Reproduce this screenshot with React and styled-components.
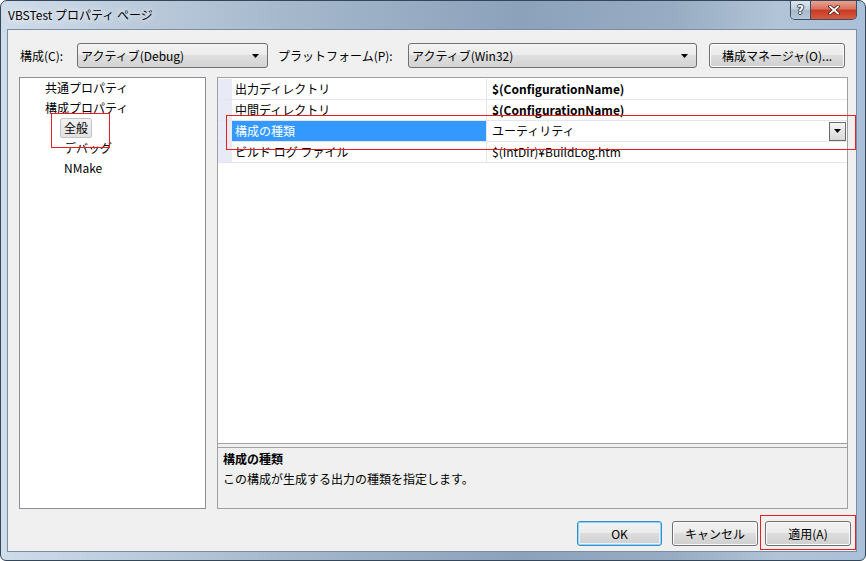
import React from "react";
import styled, { createGlobalStyle } from "styled-components";

const FONT = `"Noto Sans CJK JP", "Noto Sans", sans-serif`;

const GlobalStyle = createGlobalStyle`
  html, body {
    margin: 0;
    padding: 0;
    background: #ffffff;
  }
  body {
    font-family: ${FONT};
    font-size: 12px;
    color: #000;
  }
  * {
    box-sizing: border-box;
  }
`;

const Window = styled.div`
  position: relative;
  width: 866px;
  height: 561px;
  display: flex;
  flex-direction: column;
  border: 1px solid #34465a;
  border-radius: 7px 7px 6px 6px;
  overflow: hidden;
  background: linear-gradient(
    90deg,
    #cfdcea 0%,
    #c0cfdf 12%,
    #a3b6ca 35%,
    #8ca2bb 60%,
    #98adc3 78%,
    #b2c4d7 90%,
    #a9c0d8 100%
  );
  font-family: ${FONT};
  font-size: 12px;
`;

const TitleBar = styled.div`
  height: 28px;
  display: flex;
  align-items: flex-start;
  flex-shrink: 0;
`;

const TitleText = styled.div`
  padding-left: 7px;
  line-height: 27px;
  color: #000;
  text-shadow: 0 0 6px rgba(255, 255, 255, 0.95), 0 0 10px rgba(255, 255, 255, 0.7);
`;

const CaptionGroup = styled.div`
  margin-left: auto;
  margin-right: 8px;
  display: flex;
  height: 19px;
  border: 1px solid #3d4e62;
  border-top: none;
  border-radius: 0 0 5px 5px;
  overflow: hidden;
`;

const HelpButton = styled.div`
  width: 20px;
  display: flex;
  align-items: center;
  justify-content: center;
  border-right: 1px solid #3d4e62;
  background: linear-gradient(#dbe4ee 0%, #c3d0de 45%, #a7b9cc 50%, #b6c7d9 100%);
  color: #fff;
  font-family: "DejaVu Sans", sans-serif;
  font-weight: bold;
  font-size: 12px;
  text-shadow: 0 0 1px #233040, 1px 0 0 #3b4b5c, -1px 0 0 #3b4b5c, 0 1px 0 #3b4b5c, 0 -1px 0 #3b4b5c;
`;

const CloseButton = styled.div`
  width: 45px;
  display: flex;
  align-items: center;
  justify-content: center;
  background: linear-gradient(#eba392 0%, #d8705f 45%, #c83a26 50%, #d85a3c 100%);
`;

const Client = styled.div`
  flex: 1;
  margin: 0 8px 8px 6px;
  border: 1px solid #7b8da2;
  background: #f0f0f0;
  display: flex;
  flex-direction: column;
  padding: 13px 5px 5px 11px;
`;

const Toolbar = styled.div`
  display: flex;
  align-items: center;
  height: 25px;
`;

const Label = styled.div`
  width: ${(p) => p.$w}px;
  margin-left: ${(p) => p.$ml || 0}px;
  white-space: nowrap;
  line-height: 25px;
`;

const Combo = styled.div`
  width: ${(p) => p.$w}px;
  height: 25px;
  display: flex;
  align-items: center;
  padding: 0 8px 0 3px;
  border: 1px solid #707070;
  border-radius: 3px;
  background: linear-gradient(#f3f3f3 0%, #ebebeb 50%, #dedede 50%, #d3d3d3 100%);
  white-space: nowrap;
`;

const ComboText = styled.span`
  flex: 1;
`;

const PushButton = styled.div`
  width: ${(p) => p.$w}px;
  height: 25px;
  margin-left: ${(p) => p.$ml || 0}px;
  margin-right: ${(p) => p.$mr || 0}px;
  display: flex;
  align-items: center;
  justify-content: center;
  border: 1px solid ${(p) => (p.$default ? "#3c8ccb" : "#707070")};
  border-radius: 3px;
  background: linear-gradient(#f2f2f2 0%, #ebebeb 50%, #dddddd 50%, #cfcfcf 100%);
  box-shadow: ${(p) =>
    p.$default ? "inset 0 0 0 1px #8fd3f5, inset 0 0 0 2px #e6f5fd" : "inset 0 0 0 1px #fcfcfc"};
  white-space: nowrap;
`;

const Main = styled.div`
  display: flex;
  gap: 11px;
  height: 432px;
  margin-top: 9px;
`;

const Tree = styled.div`
  width: 187px;
  border: 1px solid #8b8f96;
  background: #fff;
`;

const TreeRow = styled.div`
  height: 20px;
  line-height: 20px;
  padding-left: ${(p) => (p.$level === 0 ? 25 : 44)}px;
  white-space: nowrap;
`;

const TreeLabel = styled.span`
  display: inline-block;
  height: 20px;
  ${(p) =>
    p.$selected &&
    `
    margin-left: -4px;
    padding: 0 3px;
    line-height: 18px;
    border: 1px solid #c4c4c4;
    border-radius: 2px;
    background: linear-gradient(#f2f2f2, #e2e2e2);
  `}
`;

const RightPanel = styled.div`
  width: 631px;
  border: 1px solid #a0a0a0;
  background: #f0f0f0;
  display: flex;
  flex-direction: column;
`;

const Grid = styled.div`
  height: 366px;
  padding-top: 1px;
  background: #fff;
  border-bottom: 1px solid #a0a0a0;
`;

const GridRow = styled.div`
  display: grid;
  grid-template-columns: 14px 255px 1fr;
  height: 21px;
  border-bottom: 1px solid #e3e6f1;
`;

const Margin = styled.div`
  background: #e8ebf6;
`;

const NameCell = styled.div`
  padding-left: 3px;
  line-height: 20px;
  border-right: 1px solid #e3e6f1;
  white-space: nowrap;
  background: ${(p) => (p.$selected ? "#3399ff" : "#fff")};
  color: ${(p) => (p.$selected ? "#fff" : "#000")};
`;

const ValueCell = styled.div`
  display: flex;
  align-items: center;
  padding-left: 5px;
  line-height: 20px;
  font-weight: ${(p) => (p.$bold ? "bold" : "normal")};
  white-space: nowrap;
`;

const DropButton = styled.div`
  margin-left: auto;
  margin-right: 1px;
  width: 17px;
  height: 19px;
  display: flex;
  align-items: center;
  justify-content: center;
  border: 1px solid #6a6a6a;
  background: linear-gradient(#f6f6f6 0%, #e6e6e6 50%, #d8d8d8 100%);
`;

const Splitter = styled.div`
  height: 3px;
`;

const Description = styled.div`
  flex: 1;
  border-top: 1px solid #a0a0a0;
  padding: 1px 5px 0;
  line-height: 20px;
`;

const DescTitle = styled.div`
  font-weight: bold;
`;

const ButtonRow = styled.div`
  display: flex;
  justify-content: flex-end;
  gap: 7px;
  margin-top: 12px;
`;

const RedBox = styled.div`
  position: absolute;
  left: ${(p) => p.$x}px;
  top: ${(p) => p.$y}px;
  width: ${(p) => p.$w}px;
  height: ${(p) => p.$h}px;
  border: 1px solid #ea1c24;
  pointer-events: none;
`;

const Arrow = () => (
  <svg width="7" height="4" viewBox="0 0 7 4">
    <path d="M0 0 H7 L3.5 4 Z" fill="#000" />
  </svg>
);

const CloseGlyph = () => (
  <svg width="12" height="10" viewBox="0 0 12 10">
    <path d="M2 1.5 L10 8.5 M10 1.5 L2 8.5" stroke="#4a1c14" strokeWidth="3.4" strokeLinecap="square" />
    <path d="M2 1.5 L10 8.5 M10 1.5 L2 8.5" stroke="#fff" strokeWidth="1.8" strokeLinecap="square" />
  </svg>
);

const rows = [
  { name: "出力ディレクトリ", value: "$(ConfigurationName)", bold: true },
  { name: "中間ディレクトリ", value: "$(ConfigurationName)", bold: true },
  { name: "構成の種類", value: "ユーティリティ", selected: true },
  { name: "ビルド ログ ファイル", value: "$(IntDir)¥BuildLog.htm" },
];

const treeItems = [
  { label: "共通プロパティ", level: 0 },
  { label: "構成プロパティ", level: 0 },
  { label: "全般", level: 1, selected: true },
  { label: "デバッグ", level: 1 },
  { label: "NMake", level: 1 },
];

export default function App() {
  return (
    <>
      <GlobalStyle />
      <Window>
        <TitleBar>
          <TitleText>VBSTest プロパティ ページ</TitleText>
          <CaptionGroup>
            <HelpButton>?</HelpButton>
            <CloseButton>
              <CloseGlyph />
            </CloseButton>
          </CaptionGroup>
        </TitleBar>

        <Client>
          <Toolbar>
            <Label $w={57} $ml={1}>構成(C):</Label>
            <Combo $w={191}>
              <ComboText>アクティブ(Debug)</ComboText>
              <Arrow />
            </Combo>
            <Label $w={130} $ml={10}>プラットフォーム(P):</Label>
            <Combo $w={289}>
              <ComboText>アクティブ(Win32)</ComboText>
              <Arrow />
            </Combo>
            <PushButton $w={136} $ml={12}>構成マネージャ(O)...</PushButton>
          </Toolbar>

          <Main>
            <Tree>
              {treeItems.map((item) => (
                <TreeRow key={item.label} $level={item.level}>
                  <TreeLabel $selected={item.selected}>{item.label}</TreeLabel>
                </TreeRow>
              ))}
            </Tree>

            <RightPanel>
              <Grid>
                {rows.map((row) => (
                  <GridRow key={row.name}>
                    <Margin />
                    <NameCell $selected={row.selected}>{row.name}</NameCell>
                    <ValueCell $bold={row.bold}>
                      {row.value}
                      {row.selected && (
                        <DropButton>
                          <Arrow />
                        </DropButton>
                      )}
                    </ValueCell>
                  </GridRow>
                ))}
              </Grid>
              <Splitter />
              <Description>
                <DescTitle>構成の種類</DescTitle>
                <div>この構成が生成する出力の種類を指定します。</div>
              </Description>
            </RightPanel>
          </Main>

          <ButtonRow>
            <PushButton $w={85} $mr={3} $default>OK</PushButton>
            <PushButton $w={86}>キャンセル</PushButton>
            <PushButton $w={86}>適用(A)</PushButton>
          </ButtonRow>
        </Client>

        <RedBox $x={50} $y={112} $w={59} $h={35} />
        <RedBox $x={225} $y={114} $w={630} $h={35} />
        <RedBox $x={759} $y={514} $w={96} $h={35} />
      </Window>
    </>
  );
}
